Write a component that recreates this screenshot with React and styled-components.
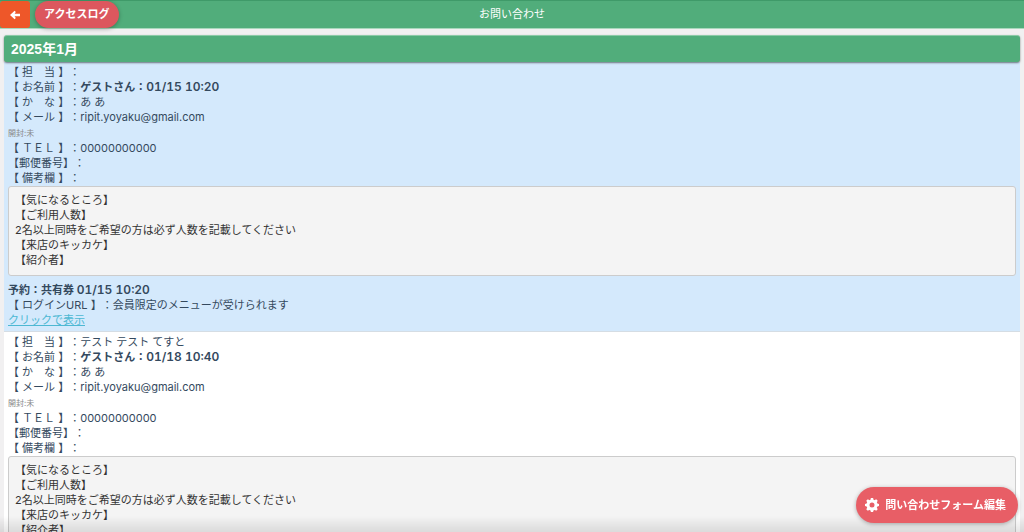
import React from 'react'
import styled, { createGlobalStyle } from 'styled-components'


const GlobalStyle = createGlobalStyle`
    * {
        box-sizing: border-box;
    }

    html {
        scrollbar-width: none;
    }

    body {
        margin: 0;
        background: #f1f0f1;
        color: #34495e;
        font-family: Inter, "Noto Sans CJK JP", sans-serif;
        font-size: 11px;
        line-height: 15px;
        text-spacing-trim: space-all;
    }

    button {
        font-family: inherit;
        font-size: 11px;
        line-height: 15px;
        cursor: pointer;
    }
`

const Header = styled.header`
    position: sticky;
    top: 0;
    z-index: 1;
    height: 29px;
    display: grid;
    grid-template-columns: 1fr auto 1fr;
    align-items: center;
    background: #51ad7b;
    border-top: 1px solid #3f9a69;
    border-bottom: 1px solid #a9d8bd;

    h1 {
        margin: 0;
        font-weight: 400;
        font-size: 11px;
        color: #fff;
    }
`

const HeaderButtons = styled.div`
    display: flex;
    align-items: center;
    gap: 5px;
`

const BackButton = styled.button`
    width: 30px;
    height: 27px;
    padding: 0;
    display: flex;
    justify-content: center;
    align-items: center;
    border: none;
    border-radius: 3px;
    background: #ee5729;
    color: #fff;
`

const PillButton = styled.button`
    height: ${props => props.$large ? '36px' : '27px'};
    padding: ${props => props.$large ? '0 12px 0 8px' : '0 10px 0 9px'};
    display: flex;
    align-items: center;
    gap: 5px;
    border: none;
    border-radius: 18px;
    background: ${props => props.$large ? '#e85e66' : '#dc575e'};
    box-shadow: 0 1px 4px rgba(0, 0, 0, 0.3);
    color: #fff;
    font-weight: 700;
`

const Floating = styled.div`
    position: fixed;
    right: 6px;
    bottom: 9px;
    z-index: 2;
`

const BottomShade = styled.div`
    position: fixed;
    left: 0;
    right: 0;
    bottom: 0;
    height: 16px;
    background: linear-gradient(rgba(0, 0, 0, 0), rgba(0, 0, 0, 0.1));
    pointer-events: none;
`

const Main = styled.main`
    padding: 6px 4px 0;
`

const Month = styled.h2`
    margin: 0;
    padding: 3px 7px;
    border-top: 1px solid #8ccaa7;
    border-radius: 3px;
    background: #51ad7b;
    box-shadow: 0 1px 2px rgba(0, 0, 0, 0.5);
    color: #fff;
    font-family: "Liberation Sans", "Noto Sans CJK JP", sans-serif;
    font-weight: 700;
    font-size: 14px;
    line-height: 20px;
    position: relative;
`

const Entry = styled.article`
    padding: 3px 4px;
    background: ${props => props.$unread ? '#d4e9fc' : '#fff'};
    border-bottom: 1px solid #d5dde4;
`

const Line = styled.div`
    white-space: pre;

    strong {
        font-weight: 600;
    }
`

const DateTime = styled.time`
    font-size: 12px;
    line-height: 1;
    font-variant-numeric: tabular-nums;
`

const Opened = styled.div`
    font-size: 8px;
    line-height: 16px;
    color: #888;
`

const Answers = styled.pre`
    margin: 0 0 7px;
    padding: 6px 6px 7px;
    border: 1px solid #ccc;
    border-radius: 3px;
    background: #f4f4f4;
    color: #333;
    font-family: inherit;
    white-space: pre-wrap;
`

const ShowLink = styled.a`
    color: #4db8d3;
    text-decoration: underline;
`

const answers = `【気になるところ】
【ご利用人数】
2名以上同時をご希望の方は必ず人数を記載してください
【来店のキッカケ】
【紹介者】`

const contacts = [
    { id: 1, staff: '', name: 'ゲストさん', date: '01/15 10:20', kana: 'あ あ', mail: 'ripit.yoyaku@gmail.com', tel: '00000000000', unread: true, reserve: '共有券' },
    { id: 2, staff: 'テスト テスト てすと', name: 'ゲストさん', date: '01/18 10:40', kana: 'あ あ', mail: 'ripit.yoyaku@gmail.com', tel: '00000000000', unread: false },
]

const teeth = [0, 45, 90, 135, 180, 225, 270, 315]


function ArrowIcon() {
    return (
        <svg width='10' height='10' viewBox='0 0 10 10' fill='currentColor' aria-hidden='true'>
            <path d='M0 5L4.6 0.8L5.8 2L4.6 3.8H10V6.2H4.6L5.8 8L4.6 9.2Z' />
        </svg>
    )
}

function GearIcon() {
    return (
        <svg width='16' height='16' viewBox='0 0 16 16' fill='currentColor' aria-hidden='true'>
            <circle cx='8' cy='8' r='4' fill='none' stroke='currentColor' strokeWidth='3' />
            {
                teeth.map(angle => (
                    <path key={angle} d='M6.3 3.5L6.9 1H9.1L9.7 3.5Z' transform={`rotate(${angle} 8 8)`} />
                ))
            }
        </svg>
    )
}

function Contact({ item }) {
    return (
        <Entry $unread={item.unread}>
            <Line>【 担　当 】：{item.staff}</Line>
            <Line>【 お名前 】：<strong>{item.name}：<DateTime>{item.date}</DateTime></strong></Line>
            <Line>【 か　な 】：{item.kana}</Line>
            <Line>【 メール 】：{item.mail}</Line>
            <Opened>開封:未</Opened>
            <Line>【 ＴＥＬ 】：{item.tel}</Line>
            <Line>【郵便番号】：</Line>
            <Line>【 備考欄 】：</Line>
            <Answers>{answers}</Answers>
            {
                item.reserve ?
                <>
                    <Line><strong>予約：{item.reserve} <DateTime>{item.date}</DateTime></strong></Line>
                    <Line>【 ログインURL 】：会員限定のメニューが受けられます</Line>
                    <ShowLink href='#login'>クリックで表示</ShowLink>
                </> : ""
            }
        </Entry>
    )
}

function App() {
    return (
        <>
            <GlobalStyle />
            <Header>
                <HeaderButtons>
                    <BackButton type='button' aria-label='戻る'>
                        <ArrowIcon />
                    </BackButton>
                    <PillButton type='button'>アクセスログ</PillButton>
                </HeaderButtons>
                <h1>お問い合わせ</h1>
            </Header>
            <Main>
                <Month>2025年1月</Month>
                {
                    contacts.map(item => (
                        <Contact item={item} key={item.id} />
                    ))
                }
            </Main>
            <BottomShade />
            <Floating>
                <PillButton type='button' $large>
                    <GearIcon />
                    問い合わせフォーム編集
                </PillButton>
            </Floating>
        </>
    )
}

export default App
